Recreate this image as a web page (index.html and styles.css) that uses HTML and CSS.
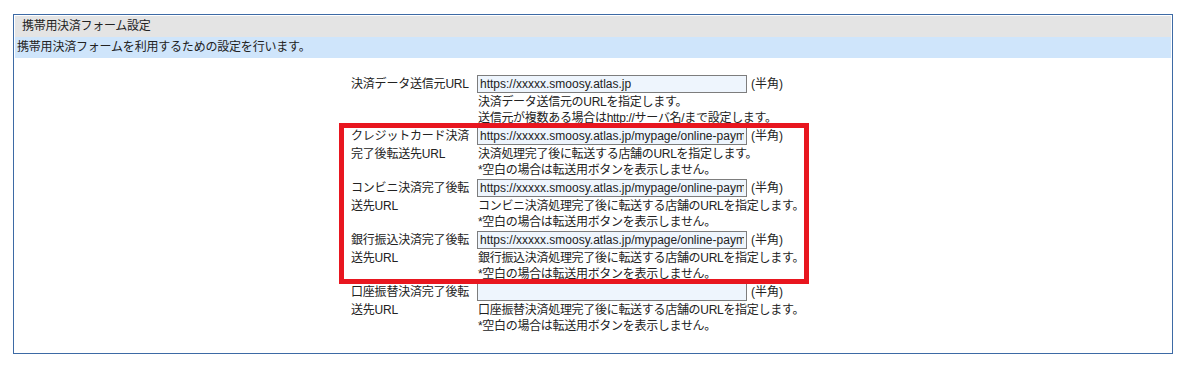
FILE: index.html
```html
<!DOCTYPE html>
<html lang="ja">
<head>
    <meta charset="UTF-8">
    <title>携帯用決済フォーム設定</title>
    <link rel="stylesheet" href="styles.css">
</head>
<body>
    <div class="panel">
        <div class="panel-title">携帯用決済フォーム設定</div>
        <div class="panel-desc">携帯用決済フォームを利用するための設定を行います。</div>
        <div class="form">
            <div class="row">
                <div class="label">決済データ送信元URL</div>
                <div class="value">
                    <div class="field"><input type="text" value="https://xxxxx.smoosy.atlas.jp"> <span class="note">(半角)</span></div>
                    <div class="help">決済データ送信元のURLを指定します。</div>
                    <div class="help">送信元が複数ある場合はhttp://サーバ名/まで設定します。</div>
                </div>
            </div>
            <div class="row">
                <div class="label">クレジットカード決済完了後転送先URL</div>
                <div class="value">
                    <div class="field"><input type="text" value="https://xxxxx.smoosy.atlas.jp/mypage/online-payment/complete"> <span class="note">(半角)</span></div>
                    <div class="help">決済処理完了後に転送する店舗のURLを指定します。</div>
                    <div class="help">*空白の場合は転送用ボタンを表示しません。</div>
                </div>
            </div>
            <div class="row">
                <div class="label">コンビニ決済完了後転送先URL</div>
                <div class="value">
                    <div class="field"><input type="text" value="https://xxxxx.smoosy.atlas.jp/mypage/online-payment/complete"> <span class="note">(半角)</span></div>
                    <div class="help">コンビニ決済処理完了後に転送する店舗のURLを指定します。</div>
                    <div class="help">*空白の場合は転送用ボタンを表示しません。</div>
                </div>
            </div>
            <div class="row">
                <div class="label">銀行振込決済完了後転送先URL</div>
                <div class="value">
                    <div class="field"><input type="text" value="https://xxxxx.smoosy.atlas.jp/mypage/online-payment/complete"> <span class="note">(半角)</span></div>
                    <div class="help">銀行振込決済処理完了後に転送する店舗のURLを指定します。</div>
                    <div class="help">*空白の場合は転送用ボタンを表示しません。</div>
                </div>
            </div>
            <div class="row">
                <div class="label">口座振替決済完了後転送先URL</div>
                <div class="value">
                    <div class="field"><input type="text" value=""> <span class="note">(半角)</span></div>
                    <div class="help">口座振替決済処理完了後に転送する店舗のURLを指定します。</div>
                    <div class="help">*空白の場合は転送用ボタンを表示しません。</div>
                </div>
            </div>
        </div>
        <div class="highlight"></div>
    </div>
</body>
</html>
```

FILE: styles.css
```css
body {
    margin: 0;
    font-family: "Liberation Sans", "Noto Sans CJK JP", sans-serif;
    font-size: 12px;
    color: #222;
    background: #fff;
}
.panel {
    position: relative;
    margin: 14px 0 0 13px;
    width: 1160px;
    height: 340px;
    box-sizing: border-box;
    border: 1px solid #3d6aa5;
    padding: 1px;
}
.panel-title {
    height: 21px;
    line-height: 21px;
    padding-left: 7px;
    background: #e4e4e4;
    letter-spacing: -0.3px;
}
.panel-desc {
    height: 21px;
    line-height: 21px;
    padding-left: 2px;
    background: #cfe5fb;
    letter-spacing: -0.2px;
}
.form {
    padding: 17px 0 0 336px;
}
.row {
    display: grid;
    grid-template-columns: 126px 360px;
    height: 52px;
}
.label {
    line-height: 18px;
    padding-right: 4px;
    letter-spacing: -0.2px;
}
.value {
    line-height: 16px;
}
.field {
    display: flex;
    align-items: center;
    height: 18px;
    margin-bottom: 1px;
    white-space: nowrap;
}
.field input {
    width: 270px;
    height: 18px;
    box-sizing: border-box;
    margin: 0;
    padding: 0 2px;
    border: 1px solid #7d7d7d;
    background: #eef5fd;
    font-family: "Liberation Sans", "Noto Sans CJK JP", sans-serif;
    font-size: 12px;
    color: #222;
}
.note {
    margin-left: 4px;
}
.help {
    padding-left: 1px;
    white-space: nowrap;
    letter-spacing: -0.3px;
}
.highlight {
    position: absolute;
    left: 325px;
    top: 108px;
    width: 470px;
    height: 161px;
    box-sizing: border-box;
    border: 5px solid #e8161f;
}
```
